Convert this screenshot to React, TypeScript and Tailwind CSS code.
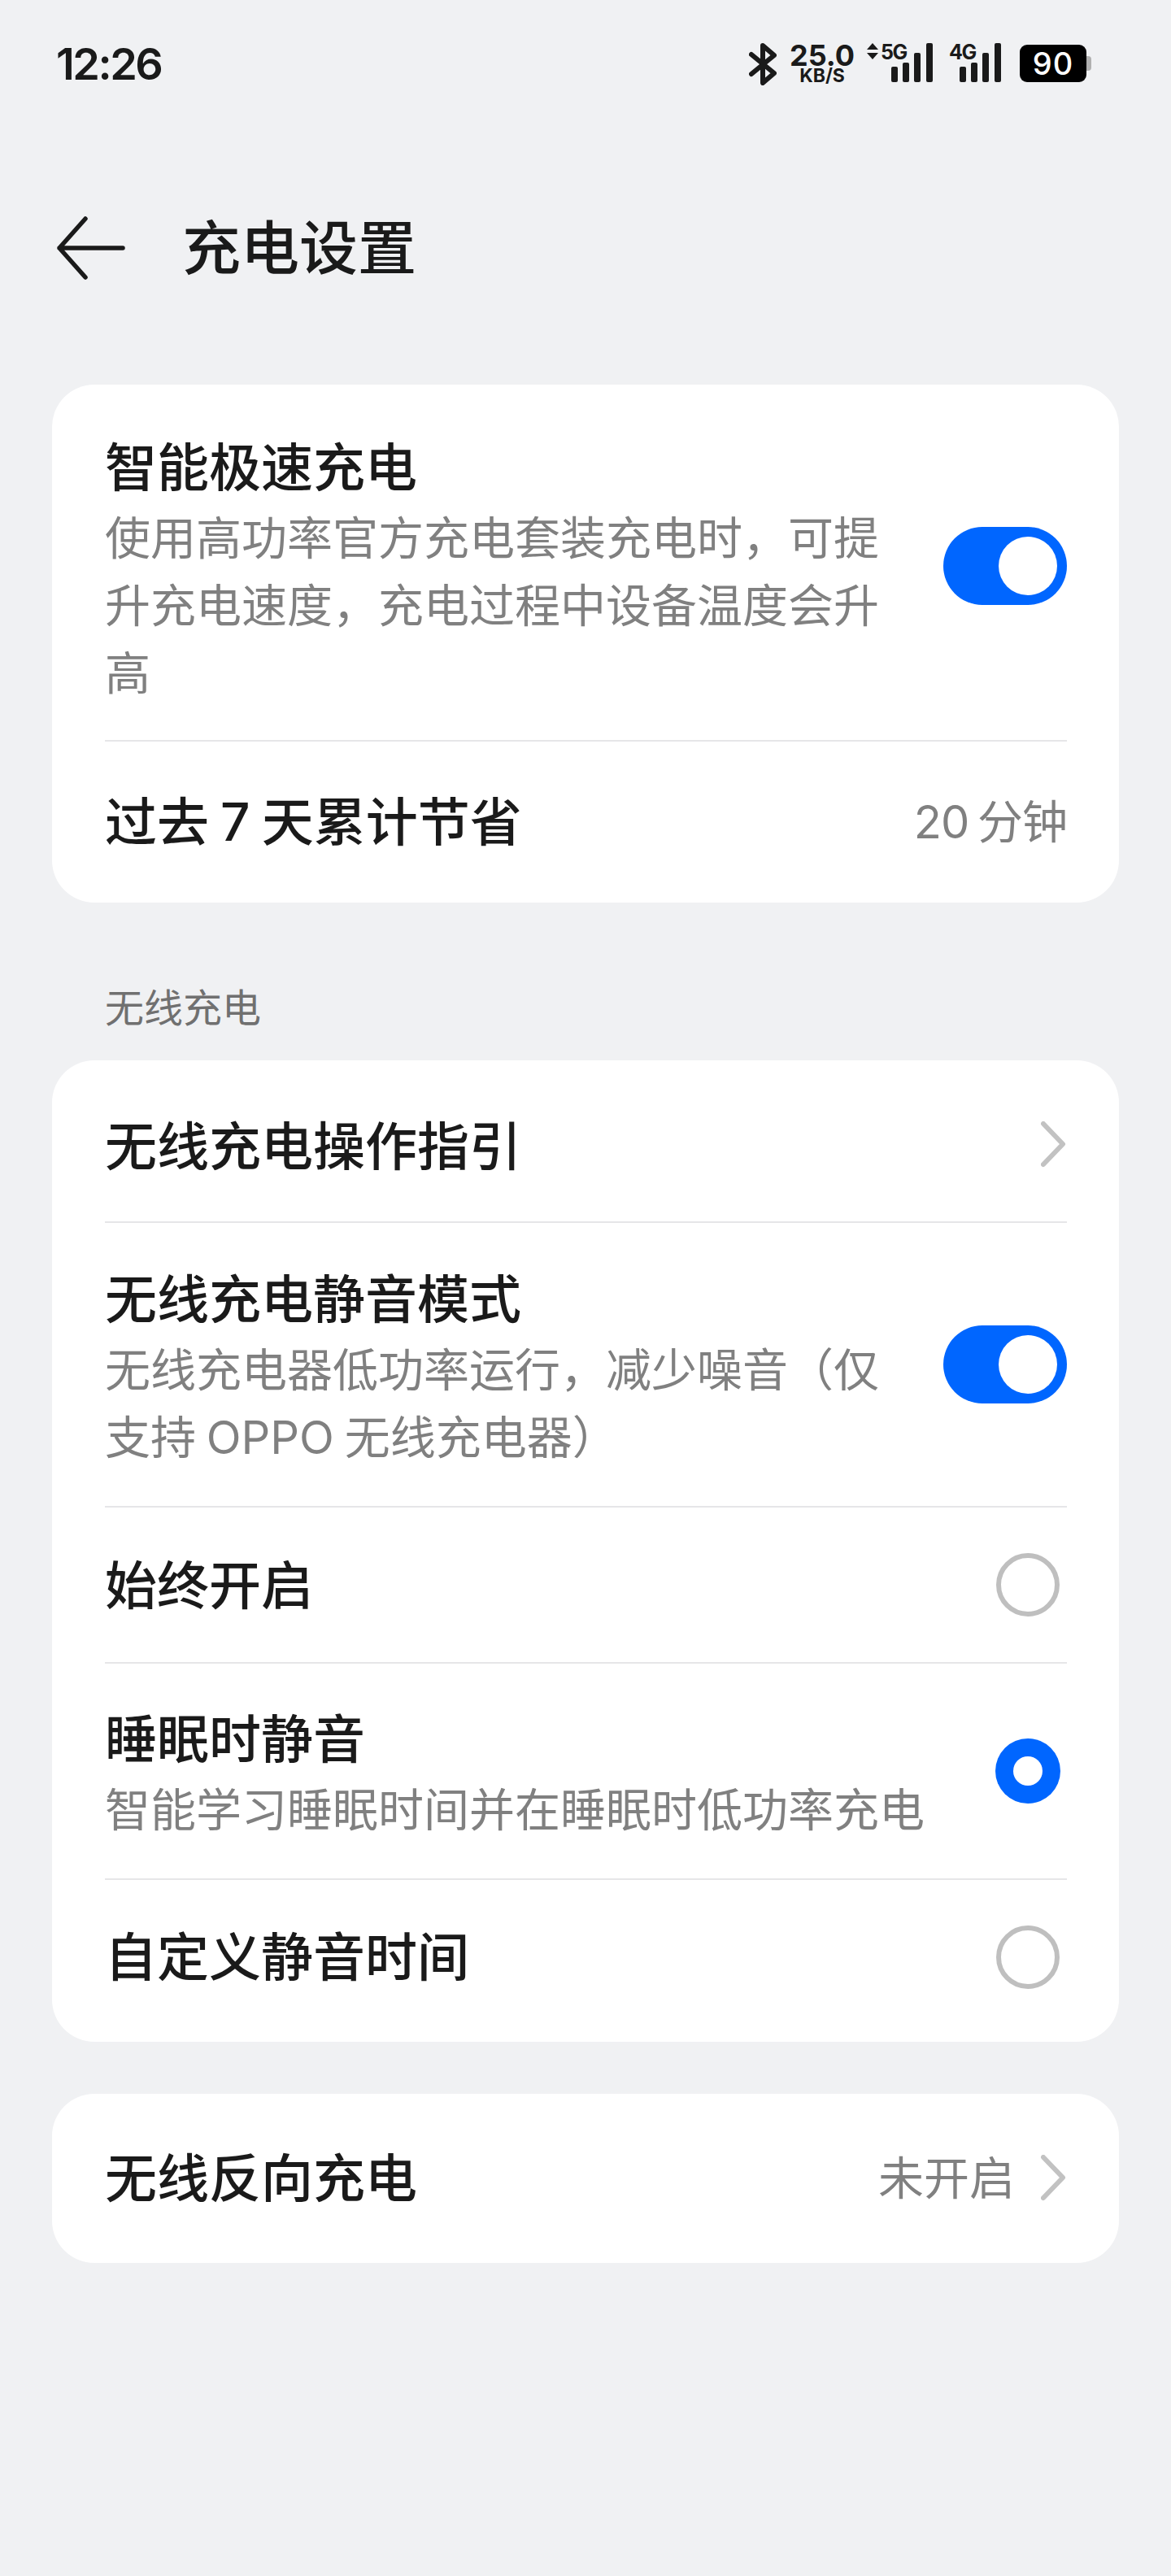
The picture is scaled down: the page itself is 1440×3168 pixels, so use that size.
import React from "react";

const cjk = "font-['Inter','Noto_Sans_CJK_SC',sans-serif]";

function Switch({ className = "" }: { className?: string }) {
  return (
    <div className={"w-[152px] h-[96px] rounded-full bg-[#0066ff] flex items-center justify-end pr-[12px] shrink-0 " + className}>
      <div className="w-[72px] h-[72px] rounded-full bg-white" />
    </div>
  );
}

function Chevron({ className = "" }: { className?: string }) {
  return (
    <svg width="32" height="58" viewBox="0 0 32 58" className={"shrink-0 " + className} fill="none">
      <path d="M3 3 L27 28 L3 53" stroke="#c2c2c2" strokeWidth="6" strokeLinecap="round" strokeLinejoin="round" />
    </svg>
  );
}

function Radio({ on, className = "" }: { on?: boolean; className?: string }) {
  return on ? (
    <div className={"w-[80px] h-[80px] rounded-full bg-[#0066ff] flex items-center justify-center shrink-0 mr-[8px] " + className}>
      <div className="w-[36px] h-[36px] rounded-full bg-white" />
    </div>
  ) : (
    <div className={"w-[78px] h-[78px] rounded-full border-[6px] border-[#bfbfbf] shrink-0 mr-[9px] " + className} />
  );
}

function Divider() {
  return <div className="h-[2px] bg-[#e6e6e8]" />;
}

function Title({ children }: { children: React.ReactNode }) {
  return <div className="text-[64px] leading-[76px] font-medium text-[#1a1a1a] [word-spacing:-3px]">{children}</div>;
}

function Sub({ children, wide }: { children: React.ReactNode; wide?: boolean }) {
  return <div className={"text-[56px] leading-[83px] text-[#808080] mt-[8px] [word-spacing:-3px] " + (wide ? "w-[1010px]" : "w-[960px]")}>{children}</div>;
}

function Bars() {
  return (
    <svg width="52" height="48" viewBox="0 0 52 48" fill="#1a1a1a">
      <rect x="0" y="29" width="8" height="19" rx="2" />
      <rect x="14" y="24" width="8" height="24" rx="2" />
      <rect x="28" y="12" width="8" height="36" rx="2" />
      <rect x="43" y="0" width="8" height="48" rx="2" />
    </svg>
  );
}

function StatusBar() {
  return (
    <div className="h-[160px] flex items-start justify-between pt-[46px] pl-[69px] pr-[98px]">
      <div className="text-[54px] leading-[66px] font-semibold text-[#1a1a1a] tracking-[-2.5px] font-['Inter']">12:26</div>
      <div className="flex items-start pt-[7px] text-[#1a1a1a] font-['Inter']">
        <svg width="34" height="52" viewBox="0 0 34 52" fill="none" className="mr-[16px]">
          <path d="M3 14 L31 37 L17 49 L17 3 L31 15 L3 38" stroke="#1a1a1a" strokeWidth="6" strokeLinecap="round" strokeLinejoin="round" />
        </svg>
        <div className="w-[80px] mr-[15px] flex flex-col items-center">
          <div className="text-[36px] leading-[30px] font-bold">25.0</div>
          <div className="text-[23px] leading-[20px] font-bold">KB/S</div>
        </div>
        <div className="relative w-[82px] h-[50px] mr-[19px]">
          <svg width="14" height="20" viewBox="0 0 14 20" fill="#1a1a1a" className="absolute left-0 top-0">
            <path d="M7 0 L14 8 L0 8 Z M0 12 L14 12 L7 20 Z" />
          </svg>
          <div className="absolute left-[17px] top-[-3px] text-[25px] leading-[28px] font-bold tracking-[-1.5px]">5G</div>
          <div className="absolute left-[30px] top-[0px]"><Bars /></div>
        </div>
        <div className="relative w-[66px] h-[50px] mr-[21px]">
          <div className="absolute left-0 top-[-3px] text-[25px] leading-[28px] font-bold tracking-[-1.5px]">4G</div>
          <div className="absolute left-[13px] top-[0px]"><Bars /></div>
        </div>
        <div className="flex items-center mt-[2px]">
          <div className="w-[82px] h-[46px] rounded-[9px] bg-black text-white text-[38px] leading-[46px] font-medium text-center tracking-[1px]">90</div>
          <div className="w-[6px] h-[18px] bg-[#b0b0b0] rounded-r-[4px]" />
        </div>
      </div>
    </div>
  );
}

export default function App() {
  return (
    <div className={"w-[1440px] h-[3168px] bg-[#f0f1f3] overflow-hidden " + cjk}>
      <StatusBar />
      <div className="h-[148px] mt-[71px] flex items-center pl-[69px]">
        <svg width="88" height="80" viewBox="0 0 88 80" fill="none" className="shrink-0">
          <path d="M36 4 L4 40 L36 76 M4 40 L82 40" stroke="#1a1a1a" strokeWidth="5.5" strokeLinecap="round" strokeLinejoin="round" />
        </svg>
        <div className="ml-[67px] text-[72px] leading-[90px] font-medium text-[#1a1a1a]">充电设置</div>
      </div>

      <div className="mx-[64px] mt-[94px] bg-white rounded-[52px] pl-[65px] pr-[64px]">
        <div className="pt-[64px] pb-[40px] flex items-center justify-between">
          <div>
            <Title>智能极速充电</Title>
            <Sub>使用高功率官方充电套装充电时，可提升充电速度，充电过程中设备温度会升高</Sub>
          </div>
          <Switch className="mt-[-16px]" />
        </div>
        <Divider />
        <div className="h-[198px] flex items-center justify-between">
          <Title>过去 7 天累计节省</Title>
          <div className="text-[56px] text-[#808080] [word-spacing:-4px] tracking-[-1px]">20 分钟</div>
        </div>
      </div>

      <div className="pl-[129px] mt-[106px] h-[48px] text-[48px] leading-[48px] text-[#707070]">无线充电</div>

      <div className="mx-[64px] mt-[40px] bg-white rounded-[52px] pl-[65px] pr-[64px]">
        <div className="h-[198px] flex items-center justify-between">
          <div className="pt-[14px]">
            <Title>无线充电操作指引</Title>
          </div>
          <Chevron className="mt-[10px]" />
        </div>
        <Divider />
        <div className="h-[348px] flex items-center justify-between">
          <div className="pt-[14px]">
            <Title>无线充电静音模式</Title>
            <Sub>无线充电器低功率运行，减少噪音（仅支持 OPPO 无线充电器）</Sub>
          </div>
          <Switch />
        </div>
        <Divider />
        <div className="h-[190px] flex items-center justify-between">
          <div className="pt-[2px]">
            <Title>始终开启</Title>
          </div>
          <Radio />
        </div>
        <Divider />
        <div className="h-[264px] flex items-center justify-between">
          <div className="pt-[13px]">
            <Title>睡眠时静音</Title>
            <Sub wide>智能学习睡眠时间并在睡眠时低功率充电</Sub>
          </div>
          <Radio on />
        </div>
        <Divider />
        <div className="h-[199px] flex items-center justify-between">
          <div className="pb-[10px]">
            <Title>自定义静音时间</Title>
          </div>
          <Radio className="mb-[10px]" />
        </div>
      </div>

      <div className="mx-[64px] mt-[64px] h-[208px] bg-white rounded-[52px] pl-[65px] pr-[64px] flex items-center justify-between">
        <Title>无线反向充电</Title>
        <div className="flex items-center">
          <div className="text-[56px] text-[#808080] mr-[32px]">未开启</div>
          <Chevron />
        </div>
      </div>
    </div>
  );
}
